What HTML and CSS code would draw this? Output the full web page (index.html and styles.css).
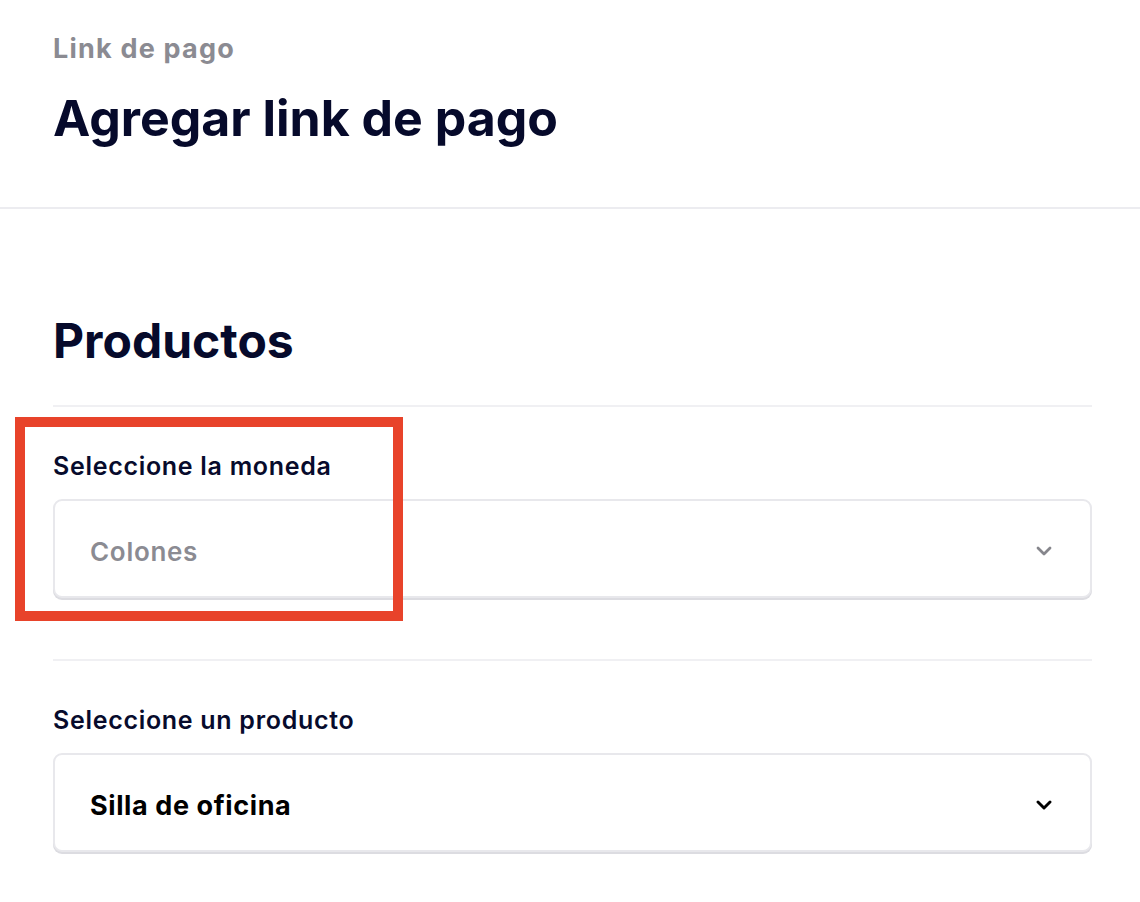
FILE: index.html
```html
<!DOCTYPE html>
<html lang="es">
<head>
<meta charset="utf-8">
<title>Agregar link de pago</title>
<link rel="stylesheet" href="styles.css">
</head>
<body>
<header class="page-header">
  <div class="breadcrumb">Link de pago</div>
  <h1 class="page-title">Agregar link de pago</h1>
</header>
<main class="content">
  <h2 class="section-title">Productos</h2>
  <div class="field field-first">
    <label class="field-label">Seleccione la moneda</label>
    <div class="select">
      <span class="select-value placeholder">Colones</span>
      <svg class="chevron chevron-muted" width="16" height="10" viewBox="0 0 16 10"><path d="M2 2l6 6 6-6" fill="none" stroke="currentColor" stroke-width="2.8" stroke-linecap="round" stroke-linejoin="round"/></svg>
    </div>
    <div class="highlight"></div>
  </div>
  <div class="field">
    <label class="field-label">Seleccione un producto</label>
    <div class="select">
      <span class="select-value">Silla de oficina</span>
      <svg class="chevron" width="16" height="10" viewBox="0 0 16 10"><path d="M2 2l6 6 6-6" fill="none" stroke="currentColor" stroke-width="2.9" stroke-linecap="round" stroke-linejoin="round"/></svg>
    </div>
  </div>
</main>
</body>
</html>
```

FILE: styles.css
```css
html, body {
  margin: 0;
  padding: 0;
  background: #ffffff;
}
body {
  font-family: Inter, "Noto Sans", sans-serif;
  color: #070b2c;
}
.page-header {
  padding: 31px 53px 0;
  height: 176px;
  border-bottom: 2px solid #ececf0;
}
.breadcrumb {
  font-size: 27px;
  font-weight: 700;
  letter-spacing: 1.2px;
  color: #8b8b92;
  line-height: 36px;
}
.page-title {
  margin: 21px 0 0;
  font-size: 50px;
  font-weight: 700;
  line-height: 60px;
  color: #060a2b;
}
.content {
  padding: 102px 48px 0 53px;
}
.section-title {
  margin: 0;
  font-size: 48px;
  font-weight: 700;
  line-height: 60px;
  color: #060a2b;
  padding-bottom: 34px;
  border-bottom: 2px solid #f0f0f3;
}
.field {
  position: relative;
  padding: 44px 0 61px;
  border-bottom: 2px solid #f0f0f3;
}
.field:last-child {
  border-bottom: none;
}
.field-label {
  display: block;
  font-size: 25px;
  font-weight: 600;
  letter-spacing: 0.7px;
  line-height: 30px;
  color: #070b2c;
  margin-bottom: 18px;
}
.select {
  display: flex;
  align-items: center;
  justify-content: space-between;
  height: 99px;
  box-sizing: border-box;
  padding: 5px 38px 0 35px;
  border: 2px solid #e8e8ec;
  border-radius: 9px;
  box-shadow: 0 2px 0 #dcdce1;
  background: #fff;
}
.select-value {
  font-size: 27px;
  font-weight: 700;
  letter-spacing: 0.6px;
  color: #000;
}
.select-value.placeholder {
  font-size: 26px;
  font-weight: 600;
  letter-spacing: 0.7px;
  color: #8b8b92;
}
.chevron {
  color: #000;
}
.chevron-muted {
  color: #86868c;
}
.highlight {
  position: absolute;
  left: -38px;
  top: 10px;
  width: 368px;
  height: 184px;
  border: 10px solid #e8432a;
}
```
